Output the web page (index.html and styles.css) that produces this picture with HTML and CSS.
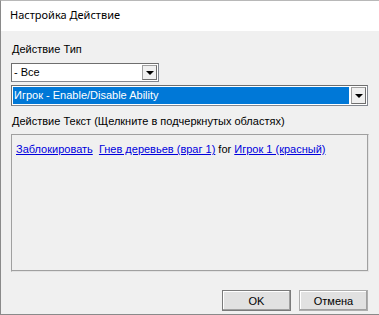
FILE: index.html
```html
<!DOCTYPE html>
<html lang="ru">

<head>
    <meta charset="UTF-8">
    <title>Настройка Действие</title>
    <link rel="stylesheet" href="styles.css">
</head>

<body>
    <div class="window">
        <div class="titlebar">Настройка Действие</div>
        <div class="dialog">
            <p class="label">Действие Тип</p>
            <div class="combo combo-short">
                <span class="combo-text">- Все</span>
                <span class="combo-btn"><i class="arrow"></i></span>
            </div>
            <div class="combo combo-wide">
                <span class="combo-text selected">Игрок - Enable/Disable Ability</span>
                <span class="combo-btn"><i class="arrow"></i></span>
            </div>
            <p class="label label-text">Действие Текст (Щелкните в подчеркнутых областях)</p>
            <div class="textbox">
                <a href="#">Заблокировать</a>&nbsp; <a href="#">Гнев деревьев (враг 1)</a> for <a href="#">Игрок 1 (красный)</a>
            </div>
            <div class="buttons">
                <button class="btn">OK</button>
                <button class="btn">Отмена</button>
            </div>
        </div>
    </div>
</body>

</html>
```

FILE: styles.css
```css
* {
    box-sizing: border-box;
    margin: 0;
    padding: 0;
}

body {
    background-color: #ffffff;
    font-family: 'Liberation Sans', Arial, sans-serif;
    font-size: 11px;
    color: #000000;
}

.window {
    width: 379px;
    height: 315px;
    display: flex;
    flex-direction: column;
    border-left: 1px solid #8a8a8a;
    border-bottom: 1px solid #8a8a8a;
    border-top: 1px solid #b8b8b8;
}

.titlebar {
    height: 30px;
    background-color: #ffffff;
    padding: 6px 0 0 9px;
    font-family: 'Noto Sans', sans-serif;
    font-size: 11px;
}

.dialog {
    flex: 1;
    background-color: #f0f0f0;
    padding: 12px 10px 0 10px;
    display: flex;
    flex-direction: column;
}

/*LABELS*/
.label {
    height: 20px;
    padding-left: 1px;
}

.label-text {
    margin-top: 9px;
    height: 19px;
}

/*COMBOS*/
.combo {
    display: flex;
    height: 19px;
    background-color: #ffffff;
    border: 1px solid #828790;
    border-top-color: #6e6e6e;
    border-left-color: #6e6e6e;
    padding: 1px;
}

.combo-short {
    width: 148px;
    margin-bottom: 3px;
}

.combo-wide {
    width: 357px;
    height: 21px;
}

.combo-text {
    flex: 1;
    padding-left: 1px;
    line-height: 15px;
}

.combo-text.selected {
    background-color: #0078d7;
    color: #ffffff;
    line-height: 17px;
    margin-right: 2px;
}

.combo-btn {
    width: 15px;
    background-color: #f0f0f0;
    border: 1px solid #a0a0a0;
    border-right-color: #6e6e6e;
    border-bottom-color: #6e6e6e;
    display: flex;
    align-items: center;
    justify-content: center;
}

.arrow {
    width: 0;
    height: 0;
    border-left: 4px solid transparent;
    border-right: 4px solid transparent;
    border-top: 4px solid #000000;
    margin-top: 1px;
}

/*TEXT BOX*/
.textbox {
    width: 358px;
    height: 138px;
    border: 1px solid #a0a0a0;
    border-right-color: #e3e3e3;
    border-bottom-color: #e3e3e3;
    box-shadow: inset -1px -1px 0 #a0a0a0;
    padding: 8px 4px;
}

.textbox a {
    color: #0000dd;
}

/*BUTTONS*/
.buttons {
    display: flex;
    justify-content: flex-end;
    gap: 8px;
    margin-top: 18px;
    padding-right: 1px;
}

.btn {
    width: 69px;
    height: 21px;
    font-family: 'Liberation Sans', Arial, sans-serif;
    font-size: 11px;
    font-weight: normal;
    color: #000000;
    background-color: #e1e1e1;
    border: 1px solid #adadad;
    box-shadow: inset -1px -1px 0 #a0a0a0, inset 1px 1px 0 #ffffff;
}

.btn:first-child {
    border-color: #7a7a7a;
}
```
